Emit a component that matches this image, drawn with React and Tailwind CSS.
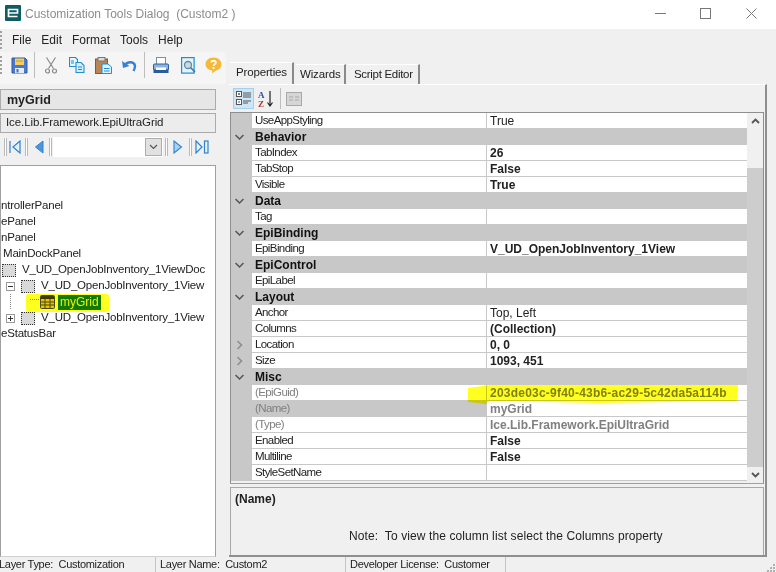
import React from "react";

const font = { fontFamily: '"Liberation Sans", Arial, sans-serif' };

const rows = [
  { name: "UseAppStyling", value: "True", plain: true },
  { cat: "Behavior" },
  { name: "TabIndex", value: "26" },
  { name: "TabStop", value: "False" },
  { name: "Visible", value: "True" },
  { cat: "Data" },
  { name: "Tag", value: "" },
  { cat: "EpiBinding" },
  { name: "EpiBinding", value: "V_UD_OpenJobInventory_1View" },
  { cat: "EpiControl" },
  { name: "EpiLabel", value: "" },
  { cat: "Layout" },
  { name: "Anchor", value: "Top, Left", plain: true },
  { name: "Columns", value: "(Collection)" },
  { name: "Location", value: "0, 0", expand: true },
  { name: "Size", value: "1093, 451", expand: true },
  { cat: "Misc" },
  { name: "(EpiGuid)", value: "203de03c-9f40-43b6-ac29-5c42da5a114b", dim: true, wide: true },
  { name: "(Name)", value: "myGrid", dim: true, selected: true },
  { name: "(Type)", value: "Ice.Lib.Framework.EpiUltraGrid", dim: true },
  { name: "Enabled", value: "False" },
  { name: "Multiline", value: "False" },
  { name: "StyleSetName", value: "" },
];

function Chevron({ down }) {
  return (
    <svg width="9" height="10" viewBox="0 0 9 10" fill="none" strokeWidth="1.5">
      {down ? <path d="M0.500 3l4 4 4-4" stroke="#555" /> : <path d="M2.500 1l4 4-4 4" stroke="#8c8c8c" />}
    </svg>
  );
}

function PropRow({ row }) {
  if (row.cat) {
    return (
      <div className="flex h-4 items-center bg-[#c8c8c8]">
        <div className="flex w-[21px] shrink-0 pl-[4px]">
          <Chevron down />
        </div>
        <span className="pl-[3px] text-[12px] font-bold text-[#111]">{row.cat}</span>
      </div>
    );
  }
  const dimText = row.dim ? "text-[#808080]" : "text-[#222]";
  return (
    <div className="flex h-4 bg-[#c8c8c8]">
      <div className="flex w-[21px] shrink-0 items-center pl-[4px]">
        {row.expand && <Chevron />}
      </div>
      <div
        className={`flex w-[235px] shrink-0 items-center border-b border-r border-[#c8c8c8] pl-[3px] pt-px text-[11.500px] tracking-[-0.6px] ${dimText} ${row.selected ? "bg-[#c8c8c8]" : "bg-white"}`}
      >
        {row.name}
      </div>
      <div
        className={`flex flex-1 items-center whitespace-nowrap border-b border-[#c8c8c8] bg-white pl-[3px] pt-px text-[12px] ${row.plain ? "" : "font-bold"} ${row.wide ? "tracking-[0.22px]" : ""} ${dimText}`}
      >
        {row.value}
      </div>
    </div>
  );
}

function Logo() {
  return (
    <svg width="16" height="16" viewBox="0 0 16 16" className="-mt-[3px]">
      <rect width="16" height="16" rx="1" fill="#0f5c63" />
      <path d="M3.500 8h9V4.500H3.500v7h9" fill="none" stroke="#fff" strokeWidth="1.700" />
    </svg>
  );
}

function Save() {
  return (
    <svg width="17" height="17" viewBox="0 0 17 17">
      <path d="M1 1h13l2 2v13H1z" fill="#4a78cc" stroke="#35599f" />
      <rect x="4" y="1.500" width="9" height="6.500" fill="#f4cf5b" />
      <path d="M5 4h7" stroke="#c99a2e" />
      <rect x="4" y="11" width="9" height="5" fill="#e6ecf5" />
      <rect x="5.500" y="12" width="2" height="3.500" fill="#3f6fc4" />
    </svg>
  );
}

function Cut() {
  return (
    <svg width="12" height="17" viewBox="0 0 12 17" fill="none" stroke="#8a8a8a" strokeWidth="1.200">
      <path d="M1.500 0.500l7 11M10.500 0.500l-7 11" />
      <circle cx="2.500" cy="14" r="2" />
      <circle cx="9.500" cy="14" r="2" />
    </svg>
  );
}

function Copy() {
  return (
    <svg width="16" height="16" viewBox="0 0 16 16" fill="#e8f6fd" stroke="#1d8fd6" strokeWidth="1.100">
      <path d="M0.500 0.500h6l2 2v7h-8z" />
      <path d="M7 5.500h5l3 3v7H7z" fill="#d3edfb" />
      <path d="M9 10h4M9 12.500h4M2 4h3M2 6h3" />
    </svg>
  );
}

function Paste() {
  return (
    <svg width="17" height="17" viewBox="0 0 17 17">
      <rect x="0.500" y="2" width="12" height="14.500" fill="#b98554" stroke="#7c5a3a" />
      <rect x="3" y="0.500" width="7" height="3.500" fill="#dcdcdc" stroke="#777" />
      <path d="M7 7h6l3.500 3v6.500H7z" fill="#e4f3fb" stroke="#1d8fd6" />
      <path d="M9 11.500h5.500M9 14h5.500" stroke="#1d8fd6" />
    </svg>
  );
}

function Undo() {
  return (
    <svg width="15" height="13" viewBox="0 0 15 13" fill="none">
      <path d="M3 6c3-4 9.500-3.500 10 1 .2 2-.7 3.500-1.500 5" stroke="#3a7fd6" strokeWidth="2.400" />
      <path d="M0 2l1 7 6.500-2z" fill="#3a7fd6" />
    </svg>
  );
}

function Printer() {
  return (
    <svg width="16" height="17" viewBox="0 0 16 17">
      <rect x="3.500" y="0.500" width="9" height="7" fill="#fff" stroke="#7b8ea3" />
      <rect x="0.500" y="7" width="15" height="6" rx="1" fill="#8db4de" stroke="#2b5f9e" />
      <rect x="0.500" y="12.500" width="15" height="3.500" fill="#2a5c9c" />
      <rect x="3" y="10.500" width="10" height="2.500" fill="#fff" />
    </svg>
  );
}

function Preview() {
  return (
    <svg width="15" height="17" viewBox="0 0 15 17" fill="none">
      <rect x="0.600" y="0.600" width="12.500" height="15.500" fill="#e3f3fb" stroke="#1d8fd6" strokeWidth="1.200" />
      <circle cx="7" cy="8" r="3.500" fill="#c3dcea" stroke="#6b8a9e" strokeWidth="1.300" />
      <path d="M9.500 10.500L14 15" stroke="#4f7488" strokeWidth="1.600" />
    </svg>
  );
}

function Help() {
  return (
    <svg width="17" height="17" viewBox="0 0 17 17">
      <path d="M8.500 0.500c4.500 0 8 2.900 8 6.700 0 3.300-2.500 5.700-5.500 6.300L7 16.500l.3-3C3.400 13 .500 10.500.500 7.200.500 3.400 4 .500 8.500.500z" fill="#f5b93a" />
      <path d="M6.200 5.400c.4-2.200 4.700-2.200 4.700.2 0 1.600-2.400 1.600-2.400 3.300" fill="none" stroke="#fff" strokeWidth="1.800" />
      <circle cx="8.500" cy="11" r="1.100" fill="#fff" />
    </svg>
  );
}

function Grip() {
  return <div className="h-[18px] w-[3px] shrink-0 border-x border-[#b9b9b9] bg-white" />;
}

function DotStrip() {
  return <div className="h-[18px] w-[2px] shrink-0 border-l-2 border-dotted border-[#a0a0a0]" />;
}

function First() {
  return (
    <svg width="12" height="14" viewBox="0 0 12 14" fill="#e6f2fc" stroke="#2f80d0" strokeWidth="1.200">
      <path d="M1 1v12" />
      <path d="M11 1v12L4 7z" />
    </svg>
  );
}

function Prev() {
  return (
    <svg width="10" height="14" viewBox="0 0 10 14" fill="#4b97df" stroke="#2f80d0">
      <path d="M9 1v12L1.500 7z" />
    </svg>
  );
}

function Next() {
  return (
    <svg width="10" height="14" viewBox="0 0 10 14" fill="#a9d2f5" stroke="#2f80d0" strokeWidth="1.100">
      <path d="M1 1v12l7.500-6z" />
    </svg>
  );
}

function Last() {
  return (
    <svg width="14" height="14" viewBox="0 0 14 14" fill="#e6f2fc" stroke="#2f80d0" strokeWidth="1.200">
      <path d="M1 1v12l6-6z" />
      <rect x="9.500" y="1" width="3.500" height="12" />
    </svg>
  );
}

function DottedBox() {
  return <div className="h-[13px] w-[14px] shrink-0 border border-dotted border-[#333] bg-[#d9d9d9]" />;
}

function PlusMinus({ plus }) {
  return (
    <svg width="9" height="9" viewBox="0 0 9 9" className="shrink-0">
      <rect x="0.500" y="0.500" width="8" height="8" fill="#fff" stroke="#999" />
      <path d={plus ? "M2 4.500h5M4.500 2v5" : "M2 4.500h5"} stroke="#333" />
    </svg>
  );
}

function GridIcon() {
  return (
    <svg width="15" height="14" viewBox="0 0 15 14" className="shrink-0">
      <rect x="0.500" y="0.500" width="14" height="13" rx="1" fill="#e9c23e" stroke="#4a4a1a" />
      <rect x="1" y="1" width="13" height="3" fill="#3c3c1e" />
      <path d="M1 7h13M1 10h13M5 4v9M10 4v9" stroke="#4a4a1a" />
    </svg>
  );
}

function TreeRow({ pl, children }) {
  return (
    <div
      style={{ paddingLeft: pl }}
      className="flex h-4 items-center gap-[6px] whitespace-nowrap text-[11.500px] tracking-[-0.2px] text-[#222]"
    >
      {children}
    </div>
  );
}

export default function App() {
  return (
    <div style={font} className="relative flex h-[572px] w-[776px] flex-col overflow-hidden bg-[#f0f0f0] text-[12px] text-[#222]">
      {/* title bar */}
      <div className="flex h-[29px] shrink-0 items-center bg-white pl-[5px]">
        <Logo />
        <span className="ml-[4px] -mt-[2px] text-[12px] text-[#8c8c8c]">Customization Tools Dialog &nbsp;(Custom2 )</span>
        <div className="ml-auto -mt-[3px] flex items-center">
          <svg width="11" height="12" viewBox="0 0 11 12" stroke="#777" fill="none" className="mr-[34px]">
            <path d="M0 6.500h11" />
          </svg>
          <svg width="11" height="11" viewBox="0 0 11 11" stroke="#777" fill="none" className="mr-[35px]">
            <rect x="0.500" y="0.500" width="10" height="10" />
          </svg>
          <svg width="11" height="11" viewBox="0 0 11 11" stroke="#777" fill="none" className="mr-[19px]">
            <path d="M0.500 0.500l10 10M10.500 0.500l-10 10" />
          </svg>
        </div>
      </div>

      <div className="flex min-h-0 flex-1">
        {/* left side */}
        <div className="flex w-[229px] shrink-0 flex-col">
          <div className="flex h-[23px] items-center gap-[10px] pb-px text-[12px]">
            <DotStrip />
            <span>File</span>
            <span>Edit</span>
            <span>Format</span>
            <span>Tools</span>
            <span>Help</span>
          </div>
          <div className="flex h-[32px] w-[226px] items-center rounded-r-[3px] bg-[#f5f5f5] pb-[6px]">
            <DotStrip />
            <div className="ml-[9px]"><Save /></div>
            <div className="ml-[6px] mr-[10px] h-[26px] w-px bg-[#bdbdbd]" />
            <Cut />
            <div className="ml-[12px]"><Copy /></div>
            <div className="ml-[10px]"><Paste /></div>
            <div className="ml-[10px]"><Undo /></div>
            <div className="ml-[7px] mr-[8px] h-[26px] w-px bg-[#bdbdbd]" />
            <Printer />
            <div className="ml-[12px]"><Preview /></div>
            <div className="ml-[9px]"><Help /></div>
          </div>
          <div className="flex min-h-0 flex-1 flex-col pt-[5px]">
            <div className="flex w-[216px] flex-1 flex-col gap-[3px]">
              <div className="flex h-[21px] items-center border border-[#ababab] bg-[#e6e6e6] pl-[6px] pt-px text-[12.500px] font-bold">myGrid</div>
              <div className="flex h-[20px] items-center border border-[#ababab] bg-[#ececec] pl-[5px] text-[11.500px] tracking-[-0.1px]">Ice.Lib.Framework.EpiUltraGrid</div>
              <div className="mt-[1px] flex h-[20px] items-center pl-[4px]">
                <Grip />
                <div className="ml-[2px]"><First /></div>
                <div className="ml-[4px]"><Grip /></div>
                <div className="ml-[6px]"><Prev /></div>
                <div className="ml-[5px]"><Grip /></div>
                <div className="ml-[1px] flex h-[20px] w-[110px] shrink-0 items-center justify-end bg-white pr-px">
                  <div className="flex h-[18px] w-[17px] items-center justify-center border border-[#adadad] bg-[#e1e1e1]">
                    <svg width="9" height="6" viewBox="0 0 9 6" fill="none" stroke="#555" strokeWidth="1.200"><path d="M1 1l3.500 3.500L8 1" /></svg>
                  </div>
                </div>
                <div className="ml-[2px]"><Grip /></div>
                <div className="ml-[5px]"><Next /></div>
                <div className="ml-[6px]"><Grip /></div>
                <div className="ml-[3px]"><Last /></div>
              </div>
              {/* tree */}
              <div className="mt-[5px] flex-1 overflow-hidden border-x border-b border-t border-[#a0a0a0] border-b-[#d0d0d0] bg-white pt-[32px]">
                <TreeRow pl={0}>ntrollerPanel</TreeRow>
                <TreeRow pl={0}>ePanel</TreeRow>
                <TreeRow pl={0}>nPanel</TreeRow>
                <TreeRow pl={2}>MainDockPanel</TreeRow>
                <TreeRow pl={1}><DottedBox />V_UD_OpenJobInventory_1ViewDoc</TreeRow>
                <TreeRow pl={5}><PlusMinus /><DottedBox />V_UD_OpenJobInventory_1View</TreeRow>
                <div className="flex h-4 items-center pl-[9px]">
                  <svg width="30" height="16" viewBox="0 0 30 16" fill="none" stroke="#888" strokeDasharray="1 1" className="shrink-0">
                    <path d="M0.500 0v16M20 5.500h10" />
                  </svg>
                  <GridIcon />
                  <span className="ml-[3px] h-[15px] bg-[#117a00] px-[2px] text-[12px] leading-[15px] text-[#e8f04a]">myGrid</span>
                </div>
                <TreeRow pl={5}><PlusMinus plus /><DottedBox />V_UD_OpenJobInventory_1View</TreeRow>
                <TreeRow pl={0}>eStatusBar</TreeRow>
              </div>
            </div>
          </div>
        </div>

        {/* right side */}
        <div className="flex min-w-0 flex-1 flex-col pt-[33px] pr-[9px]">
          <div className="flex h-[22px] items-end pl-[1px] text-[11.500px] tracking-[-0.15px]">
            <div className="flex h-[22px] w-[64px] items-center border-r-2 border-t border-[#8a8a8a] border-t-white pb-[2px] pl-[6px]">Properties</div>
            <div className="ml-[2px] flex h-[20px] w-[50px] items-center border-r-2 border-t border-[#8a8a8a] border-t-white pl-[4px]">Wizards</div>
            <div className="ml-[2px] flex h-[20px] w-[72px] items-center border-r-2 border-t border-[#8a8a8a] border-t-white pl-[6px] tracking-[-0.3px]">Script Editor</div>
          </div>
          <div className="flex min-h-0 flex-1 flex-col border-b-2 border-r-2 border-t border-[#8f8f8f] border-t-white pl-[1px] pr-[1px]">
            <div className="flex h-[27px] items-center gap-[3px] pl-[3px]">
              <div className="flex h-[21px] w-[21px] items-center justify-center border border-[#a6cfee] bg-[#cde6f7]">
                <svg width="16" height="15" viewBox="0 0 16 15" fill="none" stroke="#555">
                  <rect x="0.500" y="0.500" width="5" height="5" fill="#fff" />
                  <rect x="0.500" y="8.500" width="5" height="5" fill="#fff" />
                  <path d="M2 3h2M3 2v2M2 11h2M7 2h8M7 4h8M7 6h8M7 10h8M7 12h5" />
                </svg>
              </div>
              <svg width="18" height="18" viewBox="0 0 18 18" fill="none">
                <text x="1" y="8" fontSize="9" fontWeight="bold" fill="#2a4fa0" fontFamily="Liberation Serif">A</text>
                <text x="1" y="17" fontSize="9" fontWeight="bold" fill="#b03030" fontFamily="Liberation Serif">Z</text>
                <path d="M13 1v14M10.500 12.500l2.500 3.500 2.500-3.500" stroke="#222" strokeWidth="1.200" />
              </svg>
              <div className="mx-[2px] h-[21px] w-px bg-[#bdbdbd]" />
              <svg width="16" height="14" viewBox="0 0 16 14" fill="#d6d6d6" stroke="#a8a8a8">
                <rect x="0.500" y="0.500" width="15" height="13" />
                <path d="M3 5h4M3 8h4M9 5h4M9 8h4" />
              </svg>
            </div>
            {/* property grid */}
            <div className="flex h-[372px] border border-[#8f8f8f] border-b-[#a0a0a0] bg-[#f0f0f0]">
              <div className="w-[516px] shrink-0">
                {rows.map((row) => (
                  <PropRow key={row.cat || row.name + row.value} row={row} />
                ))}
              </div>
              <div className="flex w-[16px] flex-col items-center">
                <div className="flex h-[16px] w-full items-center justify-center">
                  <svg width="9" height="6" viewBox="0 0 9 6" fill="none" stroke="#555" strokeWidth="1.800"><path d="M1 5l3.500-3.500L8 5" /></svg>
                </div>
                <div className="mt-[39px] h-[299px] w-full bg-[#cdcdcd]" />
                <div className="flex flex-1 items-center">
                  <svg width="9" height="6" viewBox="0 0 9 6" fill="none" stroke="#555" strokeWidth="1.800"><path d="M1 1l3.500 3.500L8 1" /></svg>
                </div>
              </div>
            </div>
            {/* description */}
            <div className="mt-[3px] flex flex-1 flex-col border-l border-r border-t border-[#a8a8a8] pl-[4px]">
              <div className="pt-[2px] text-[12px] font-bold">(Name)</div>
              <div className="mt-[19px] pl-[114px] text-[12px] tracking-[0.1px] whitespace-nowrap">Note:&nbsp; To view the column list select the Columns property</div>
            </div>
          </div>
        </div>
      </div>

      {/* status bar */}
      <div className="flex h-[15px] shrink-0 items-center text-[11px] tracking-[-0.3px]">
        <span className="-ml-[1px] w-[156px] whitespace-nowrap">Layer Type:&nbsp; Customization</span>
        <div className="h-full w-px bg-[#c4c4c4]" />
        <span className="w-[189px] pl-[4px] whitespace-nowrap">Layer Name:&nbsp; Custom2</span>
        <div className="h-full w-px bg-[#c4c4c4]" />
        <span className="w-[159px] pl-[4px] whitespace-nowrap">Developer License:&nbsp; Customer</span>
        <div className="h-full w-px bg-[#c4c4c4]" />
        <svg width="8" height="8" viewBox="0 0 8 8" fill="#b0b0b0" className="ml-auto mr-px mt-[6px]">
          <rect x="6" y="0" width="2" height="2" />
          <rect x="3" y="3" width="2" height="2" />
          <rect x="6" y="3" width="2" height="2" />
          <rect x="0" y="6" width="2" height="2" />
          <rect x="3" y="6" width="2" height="2" />
          <rect x="6" y="6" width="2" height="2" />
        </svg>
      </div>

      {/* highlighter marks */}
      <svg width="776" height="572" viewBox="0 0 776 572" className="pointer-events-none absolute left-0 top-0 mix-blend-multiply">
        <path d="M468 388L490 385L738 385L737 401L600 403L490 401L486 404L468 402z" fill="#ffff20" />
        <rect x="26" y="294" width="83" height="18" rx="2" fill="#ffff20" />
      </svg>
    </div>
  );
}
